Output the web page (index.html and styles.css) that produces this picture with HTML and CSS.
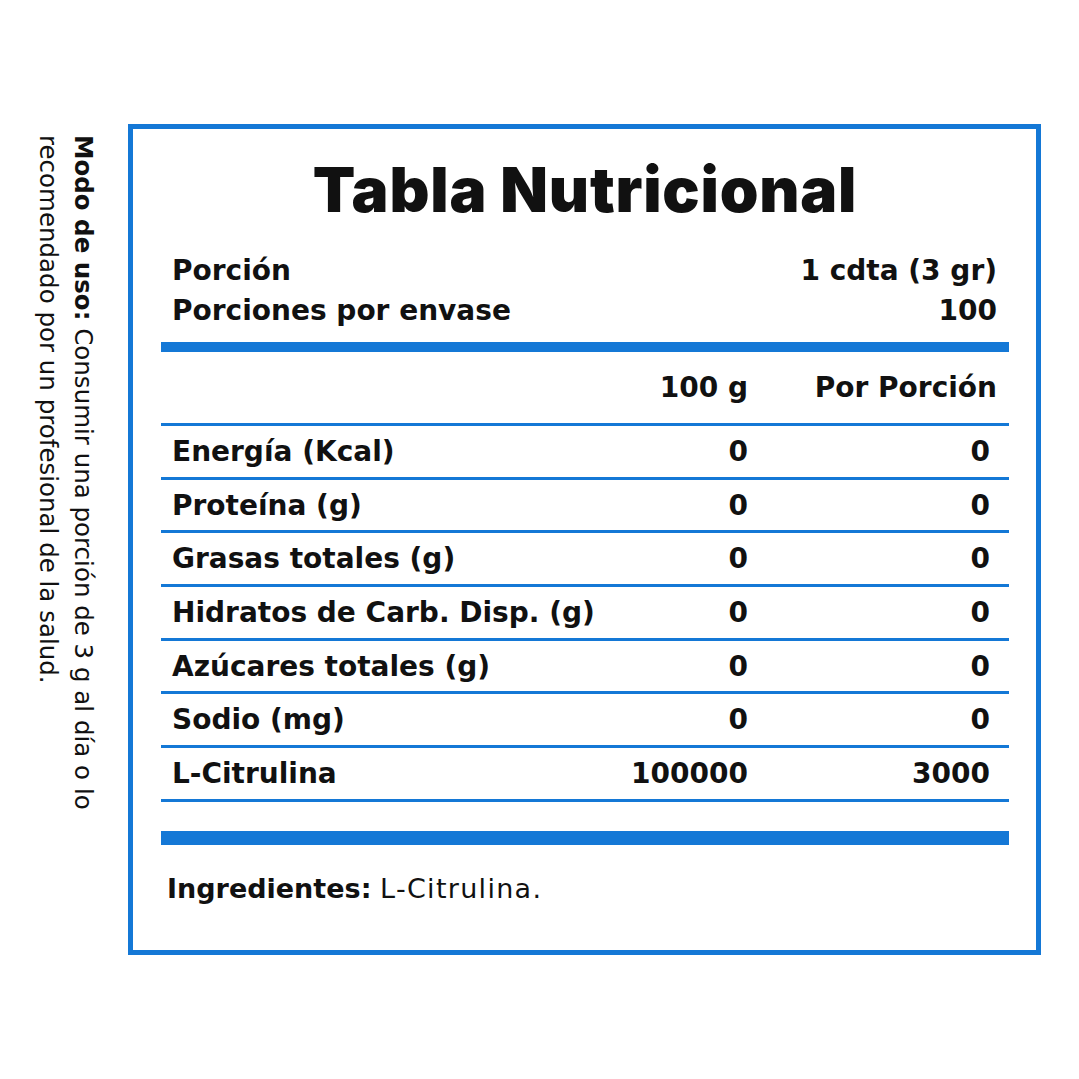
FILE: index.html
```html
<!DOCTYPE html>
<html lang="es">
<head>
<meta charset="utf-8">
<title>Tabla Nutricional</title>
<link rel="stylesheet" href="styles.css">
</head>
<body>
<div class="page">
  <p class="usage"><b>Modo de uso:</b> Consumir una porción de 3 g al día o lo<br>recomendado por un profesional de la salud.</p>
  <section class="panel">
    <h1 class="title">Tabla Nutricional</h1>
    <div class="serving">
      <div class="serving-row"><span>Porción</span><span>1 cdta (3 gr)</span></div>
      <div class="serving-row"><span>Porciones por envase</span><span>100</span></div>
    </div>
    <div class="bar"></div>
    <div class="table">
      <div class="row head"><span class="label"></span><span class="c2">100 g</span><span class="c3">Por Porción</span></div>
      <div class="row"><span class="label">Energía (Kcal)</span><span class="c2">0</span><span class="c3">0</span></div>
      <div class="row"><span class="label">Proteína (g)</span><span class="c2">0</span><span class="c3">0</span></div>
      <div class="row"><span class="label">Grasas totales (g)</span><span class="c2">0</span><span class="c3">0</span></div>
      <div class="row"><span class="label">Hidratos de Carb. Disp. (g)</span><span class="c2">0</span><span class="c3">0</span></div>
      <div class="row"><span class="label">Azúcares totales (g)</span><span class="c2">0</span><span class="c3">0</span></div>
      <div class="row"><span class="label">Sodio (mg)</span><span class="c2">0</span><span class="c3">0</span></div>
      <div class="row strong"><span class="label">L-Citrulina</span><span class="c2">100000</span><span class="c3">3000</span></div>
    </div>
    <div class="bar thick"></div>
    <p class="ingredients"><b>Ingredientes:</b> <span class="ing-list">L-Citrulina.</span></p>
  </section>
</div>
</body>
</html>
```

FILE: styles.css
```css
html, body {
  margin: 0;
  padding: 0;
  background: #ffffff;
}

body {
  font-family: "DejaVu Sans", "Noto Sans", sans-serif;
  color: #111111;
}

.page {
  display: flex;
  align-items: flex-start;
  padding: 124px 0 0 31px;
  width: 1079px;
  height: 1079px;
  box-sizing: border-box;
}

.usage {
  writing-mode: vertical-rl;
  margin: 11px 27px 0 0;
  font-size: 24.5px;
  line-height: 35px;
  font-weight: 400;
  color: #111;
  white-space: nowrap;
}

.usage b {
  font-weight: 700;
}

.panel {
  box-sizing: border-box;
  width: 913px;
  height: 831px;
  border: 5px solid #1478d6;
  padding: 0 27px 0 28px;
  display: flex;
  flex-direction: column;
}

.title {
  margin: 25px 0 0;
  text-align: center;
  font-family: "Inter", "DejaVu Sans", sans-serif;
  font-size: 62px;
  line-height: 72px;
  font-weight: 900;
  letter-spacing: 0.8px;
}

.serving {
  padding: 25px 12px 0 11px;
}

.serving-row {
  display: flex;
  justify-content: space-between;
  font-size: 28px;
  line-height: 40px;
  font-weight: 700;
}

.bar {
  height: 10px;
  background: #1478d6;
  margin-top: 11px;
}

.bar.thick {
  height: 14px;
  margin-top: 29px;
}

.table {
  display: flex;
  flex-direction: column;
}

.row {
  display: grid;
  grid-template-columns: minmax(0, 1fr) 180px 242px;
  align-items: center;
  height: 53.7px;
  border-bottom: 3px solid #1478d6;
  box-sizing: border-box;
  padding: 0 19px 0 11px;
  font-size: 28px;
  font-weight: 700;
  white-space: nowrap;
}

.row.head {
  height: 74px;
  padding-right: 12px;
  grid-template-columns: minmax(0, 1fr) 180px 249px;
}

.c2, .c3 {
  text-align: right;
}

.ingredients {
  margin: 26px 0 0 6px;
  font-size: 27px;
  line-height: 36px;
  font-weight: 400;
}

.ingredients b {
  font-weight: 700;
}

.ing-list {
  letter-spacing: 1.3px;
}
```
